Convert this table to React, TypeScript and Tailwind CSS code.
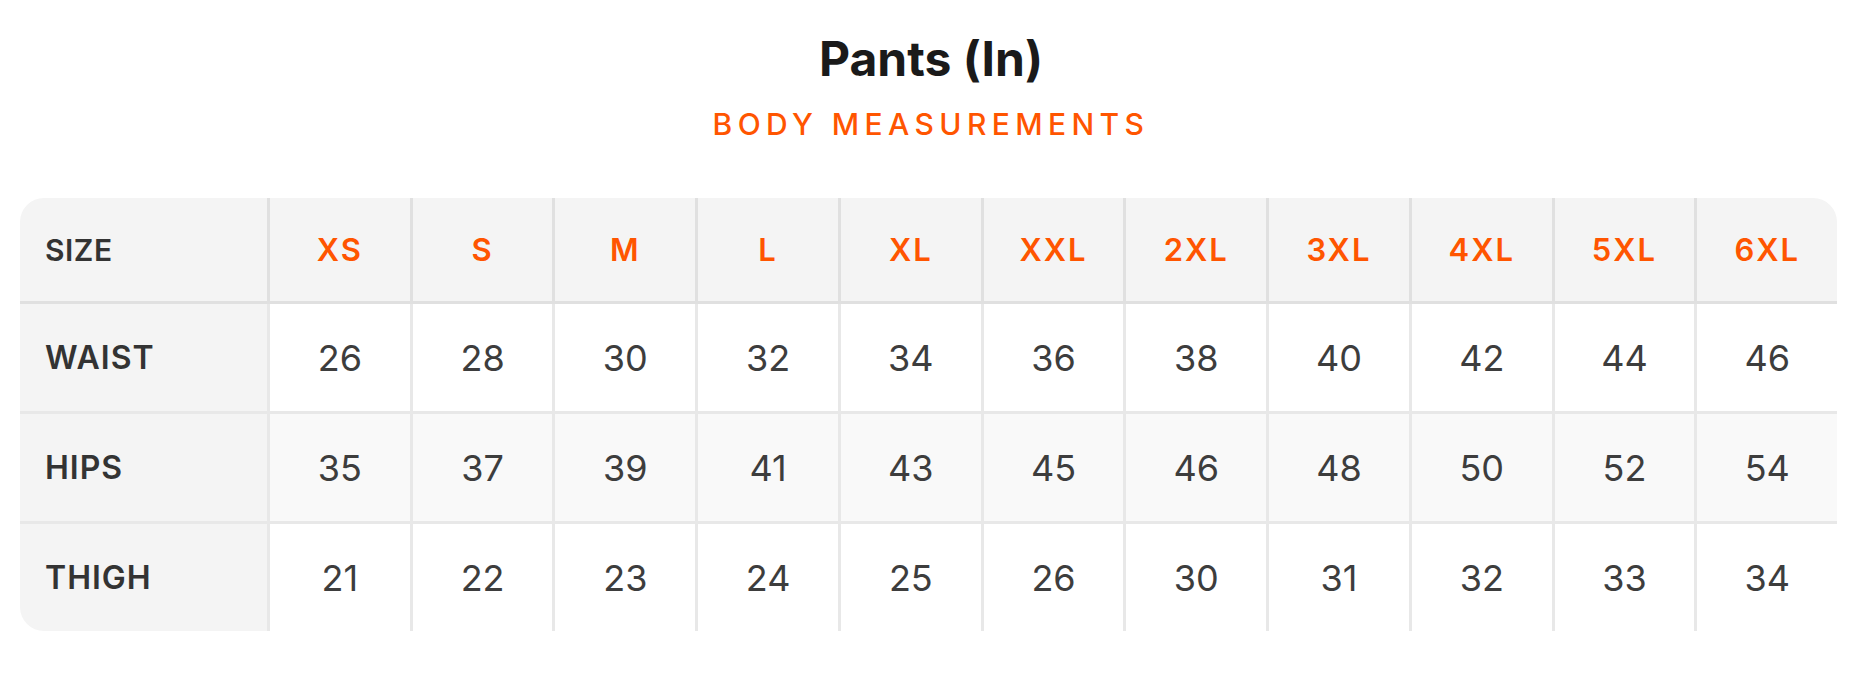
const sizes = ["XS", "S", "M", "L", "XL", "XXL", "2XL", "3XL", "4XL", "5XL", "6XL"];

const rows = [
  { label: "WAIST", values: [26, 28, 30, 32, 34, 36, 38, 40, 42, 44, 46], bg: "bg-white" },
  { label: "HIPS", values: [35, 37, 39, 41, 43, 45, 46, 48, 50, 52, 54], bg: "bg-[#f9f9f9]" },
  { label: "THIGH", values: [21, 22, 23, 24, 25, 26, 30, 31, 32, 33, 34], bg: "bg-white" },
];

export default function App() {
  return (
    <div className="min-h-screen bg-white font-['Inter',sans-serif] pt-[35px] pb-[50px]">
      <div className="text-center">
        <h1 className="text-[48px] leading-none font-bold text-[#1a1a1a]">Pants (In)</h1>
        <p className="mt-[26px] text-[30px] leading-none font-medium tracking-[5.4px] text-[#ff5500]">BODY MEASUREMENTS</p>
      </div>

      <div className="ml-[20px] mt-[59px] w-[1817px] rounded-[24px] overflow-hidden">
        {/* header */}
        <div className="flex h-[106px] bg-[#f4f4f4] border-b-[3px] border-[#e0e0e0]">
          <div className="w-[250px] shrink-0 flex items-center pl-[25px] border-r-[3px] border-[#e0e0e0] text-[30px] leading-none font-semibold tracking-[0.5px] text-[#333]">
            SIZE
          </div>
          {sizes.map((s, i) => (
            <div
              key={s}
              className={`flex-1 basis-0 flex items-center justify-center text-[31px] leading-none font-semibold tracking-[2px] text-[#ff5500] ${i < sizes.length - 1 ? "border-r-[3px] border-[#e0e0e0]" : ""}`}
            >
              {s}
            </div>
          ))}
        </div>

        {rows.map((r, ri) => (
          <div
            key={r.label}
            className={`flex ${r.bg} ${ri < rows.length - 1 ? "h-[110px] border-b-[3px] border-[#e8e8e8]" : "h-[107px]"}`}
          >
            <div className="w-[250px] shrink-0 flex items-center pl-[25px] bg-[#f4f4f4] border-r-[3px] border-[#e8e8e8] text-[32px] leading-none font-semibold tracking-[1px] text-[#333]">
              {r.label}
            </div>
            {r.values.map((v, i) => (
              <div
                key={i}
                className={`flex-1 basis-0 flex items-center justify-center text-[36px] leading-none text-[#3d3d3d] ${i < r.values.length - 1 ? "border-r-[3px] border-[#e8e8e8]" : ""}`}
              >
                {v}
              </div>
            ))}
          </div>
        ))}
      </div>
    </div>
  );
}
